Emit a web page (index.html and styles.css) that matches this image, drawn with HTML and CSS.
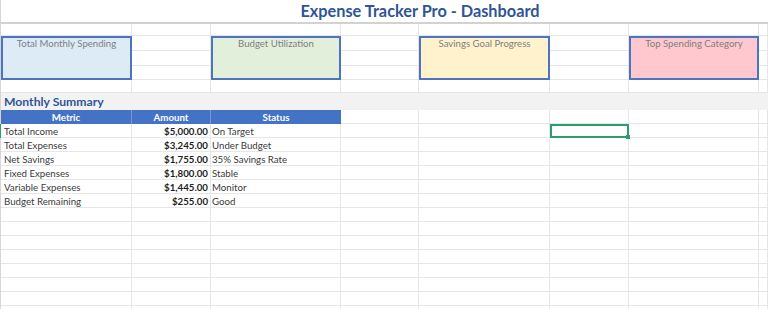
FILE: index.html
```html
<!DOCTYPE html>
<html lang="en">
<head>
<meta charset="utf-8">
<title>Expense Tracker Pro - Dashboard</title>
<link rel="stylesheet" href="styles.css">
</head>
<body>
<div class="sheet">
  <!-- row 1 -->
  <div class="c title">Expense Tracker Pro - Dashboard</div>
  <!-- row 2 -->
  <div class="c"></div><div class="c"></div><div class="c"></div><div class="c"></div><div class="c"></div><div class="c"></div><div class="c"></div><div class="c"></div>
  <!-- rows 3-5 : KPI cards -->
  <div class="box box-blue">Total Monthly Spending</div>
  <div class="c"></div>
  <div class="box box-green">Budget Utilization</div>
  <div class="c"></div>
  <div class="box box-yellow">Savings Goal Progress</div>
  <div class="c"></div>
  <div class="box box-pink">Top Spending Category</div>
  <div class="c"></div>
  <div class="c"></div><div class="c"></div><div class="c"></div><div class="c"></div>
  <div class="c"></div><div class="c"></div><div class="c"></div><div class="c"></div>
  <!-- row 6 -->
  <div class="c"></div><div class="c"></div><div class="c"></div><div class="c"></div><div class="c"></div><div class="c"></div><div class="c"></div><div class="c"></div>
  <!-- row 7 -->
  <div class="band">Monthly Summary</div>
  <!-- row 8 -->
  <div class="th">Metric</div><div class="th">Amount</div><div class="th th-last">Status</div>
  <div class="c"></div><div class="c"></div><div class="c"></div><div class="c"></div><div class="c"></div>
  <!-- data rows -->
  <div class="c metric mark">Total Income</div><div class="c amt">$5,000.00</div><div class="c status">On Target</div>
  <div class="c"></div><div class="c"></div><div class="c sel"></div><div class="c"></div><div class="c"></div>
  <div class="c metric">Total Expenses</div><div class="c amt">$3,245.00</div><div class="c status">Under Budget</div>
  <div class="c"></div><div class="c"></div><div class="c"></div><div class="c"></div><div class="c"></div>
  <div class="c metric">Net Savings</div><div class="c amt">$1,755.00</div><div class="c status">35% Savings Rate</div>
  <div class="c"></div><div class="c"></div><div class="c"></div><div class="c"></div><div class="c"></div>
  <div class="c metric">Fixed Expenses</div><div class="c amt">$1,800.00</div><div class="c status">Stable</div>
  <div class="c"></div><div class="c"></div><div class="c"></div><div class="c"></div><div class="c"></div>
  <div class="c metric">Variable Expenses</div><div class="c amt">$1,445.00</div><div class="c status">Monitor</div>
  <div class="c"></div><div class="c"></div><div class="c"></div><div class="c"></div><div class="c"></div>
  <div class="c metric">Budget Remaining</div><div class="c amt">$255.00</div><div class="c status">Good</div>
  <div class="c"></div><div class="c"></div><div class="c"></div><div class="c"></div><div class="c"></div>
  <!-- empty rows -->
  <div class="c"></div><div class="c"></div><div class="c"></div><div class="c"></div><div class="c"></div><div class="c"></div><div class="c"></div><div class="c"></div>
  <div class="c"></div><div class="c"></div><div class="c"></div><div class="c"></div><div class="c"></div><div class="c"></div><div class="c"></div><div class="c"></div>
  <div class="c"></div><div class="c"></div><div class="c"></div><div class="c"></div><div class="c"></div><div class="c"></div><div class="c"></div><div class="c"></div>
  <div class="c"></div><div class="c"></div><div class="c"></div><div class="c"></div><div class="c"></div><div class="c"></div><div class="c"></div><div class="c"></div>
  <div class="c"></div><div class="c"></div><div class="c"></div><div class="c"></div><div class="c"></div><div class="c"></div><div class="c"></div><div class="c"></div>
  <div class="c"></div><div class="c"></div><div class="c"></div><div class="c"></div><div class="c"></div><div class="c"></div><div class="c"></div><div class="c"></div>
  <div class="c"></div><div class="c"></div><div class="c"></div><div class="c"></div><div class="c"></div><div class="c"></div><div class="c"></div><div class="c"></div>
  <div class="c"></div><div class="c"></div><div class="c"></div><div class="c"></div><div class="c"></div><div class="c"></div><div class="c"></div><div class="c"></div>
</div>
</body>
</html>
```
FILE: styles.css
```css
* {
  box-sizing: border-box;
}

html,
body {
  margin: 0;
  padding: 0;
  background: #ffffff;
}

body {
  width: 768px;
  height: 309px;
  overflow: hidden;
  font-family: "Lato", "Open Sans", sans-serif;
  font-size: 9.7px;
  color: #3a3a3a;
}

.sheet {
  display: grid;
  grid-template-columns: 131px 79px 130px 78px 131px 79px 130px 9px;
  grid-template-rows: 24px 12px 15px 15px 14px 13px 17px repeat(15, 14px);
  width: 768px;
  border-left: 1px solid #d6d6d6;
}

.c {
  border-right: 1px solid #e6e6e6;
  border-bottom: 1px solid #e6e6e6;
  line-height: 13px;
  padding: 1px 3px 0;
  white-space: nowrap;
}

.title {
  grid-column: 1 / -1;
  border-right: 0;
  border-bottom: 2px solid #d2d2d2;
  padding: 0 0 0 71px;
  font-size: 16.3px;
  font-weight: 700;
  line-height: 22px;
  color: #2f5597;
  text-align: center;
}

.box {
  grid-row: span 3;
  border: 2px solid #4d74c1;
  color: #7f7f7f;
  font-size: 9.6px;
  text-align: center;
  line-height: 11px;
  padding: 0 2px;
  white-space: nowrap;
}

.box-blue {
  background: #ddebf7;
}

.box-green {
  background: #e2efda;
}

.box-yellow {
  background: #fff2cc;
}

.box-pink {
  background: #ffc7ce;
}

.band {
  grid-column: 1 / -1;
  background: #f2f2f2;
  padding: 1px 3px 0;
  font-size: 12.2px;
  font-weight: 700;
  line-height: 16px;
  color: #2f5597;
  white-space: nowrap;
}

.th {
  background: #4472c4;
  color: #ffffff;
  font-weight: 700;
  text-align: center;
  line-height: 13px;
  padding-top: 1px;
  border-right: 1px solid #7896d2;
}

.th-last {
  border-right: 0;
}

.metric {
  padding-left: 3px;
  color: #3a3a3a;
}

.amt {
  text-align: right;
  padding-right: 2px;
  font-weight: 700;
  color: #1e1e1e;
}

.status {
  padding-left: 1px;
  color: #3a3a3a;
}

.mark {
  position: relative;
}

.mark::before {
  content: "";
  position: absolute;
  left: -1px;
  top: 0;
  bottom: -1px;
  width: 1px;
  background: #2e9c6f;
}

.sel {
  position: relative;
  border: 2px solid #2e9c6f;
  z-index: 1;
}

.sel::after {
  content: "";
  position: absolute;
  right: -3px;
  bottom: -3px;
  width: 4px;
  height: 4px;
  background: #2e9c6f;
}
```
